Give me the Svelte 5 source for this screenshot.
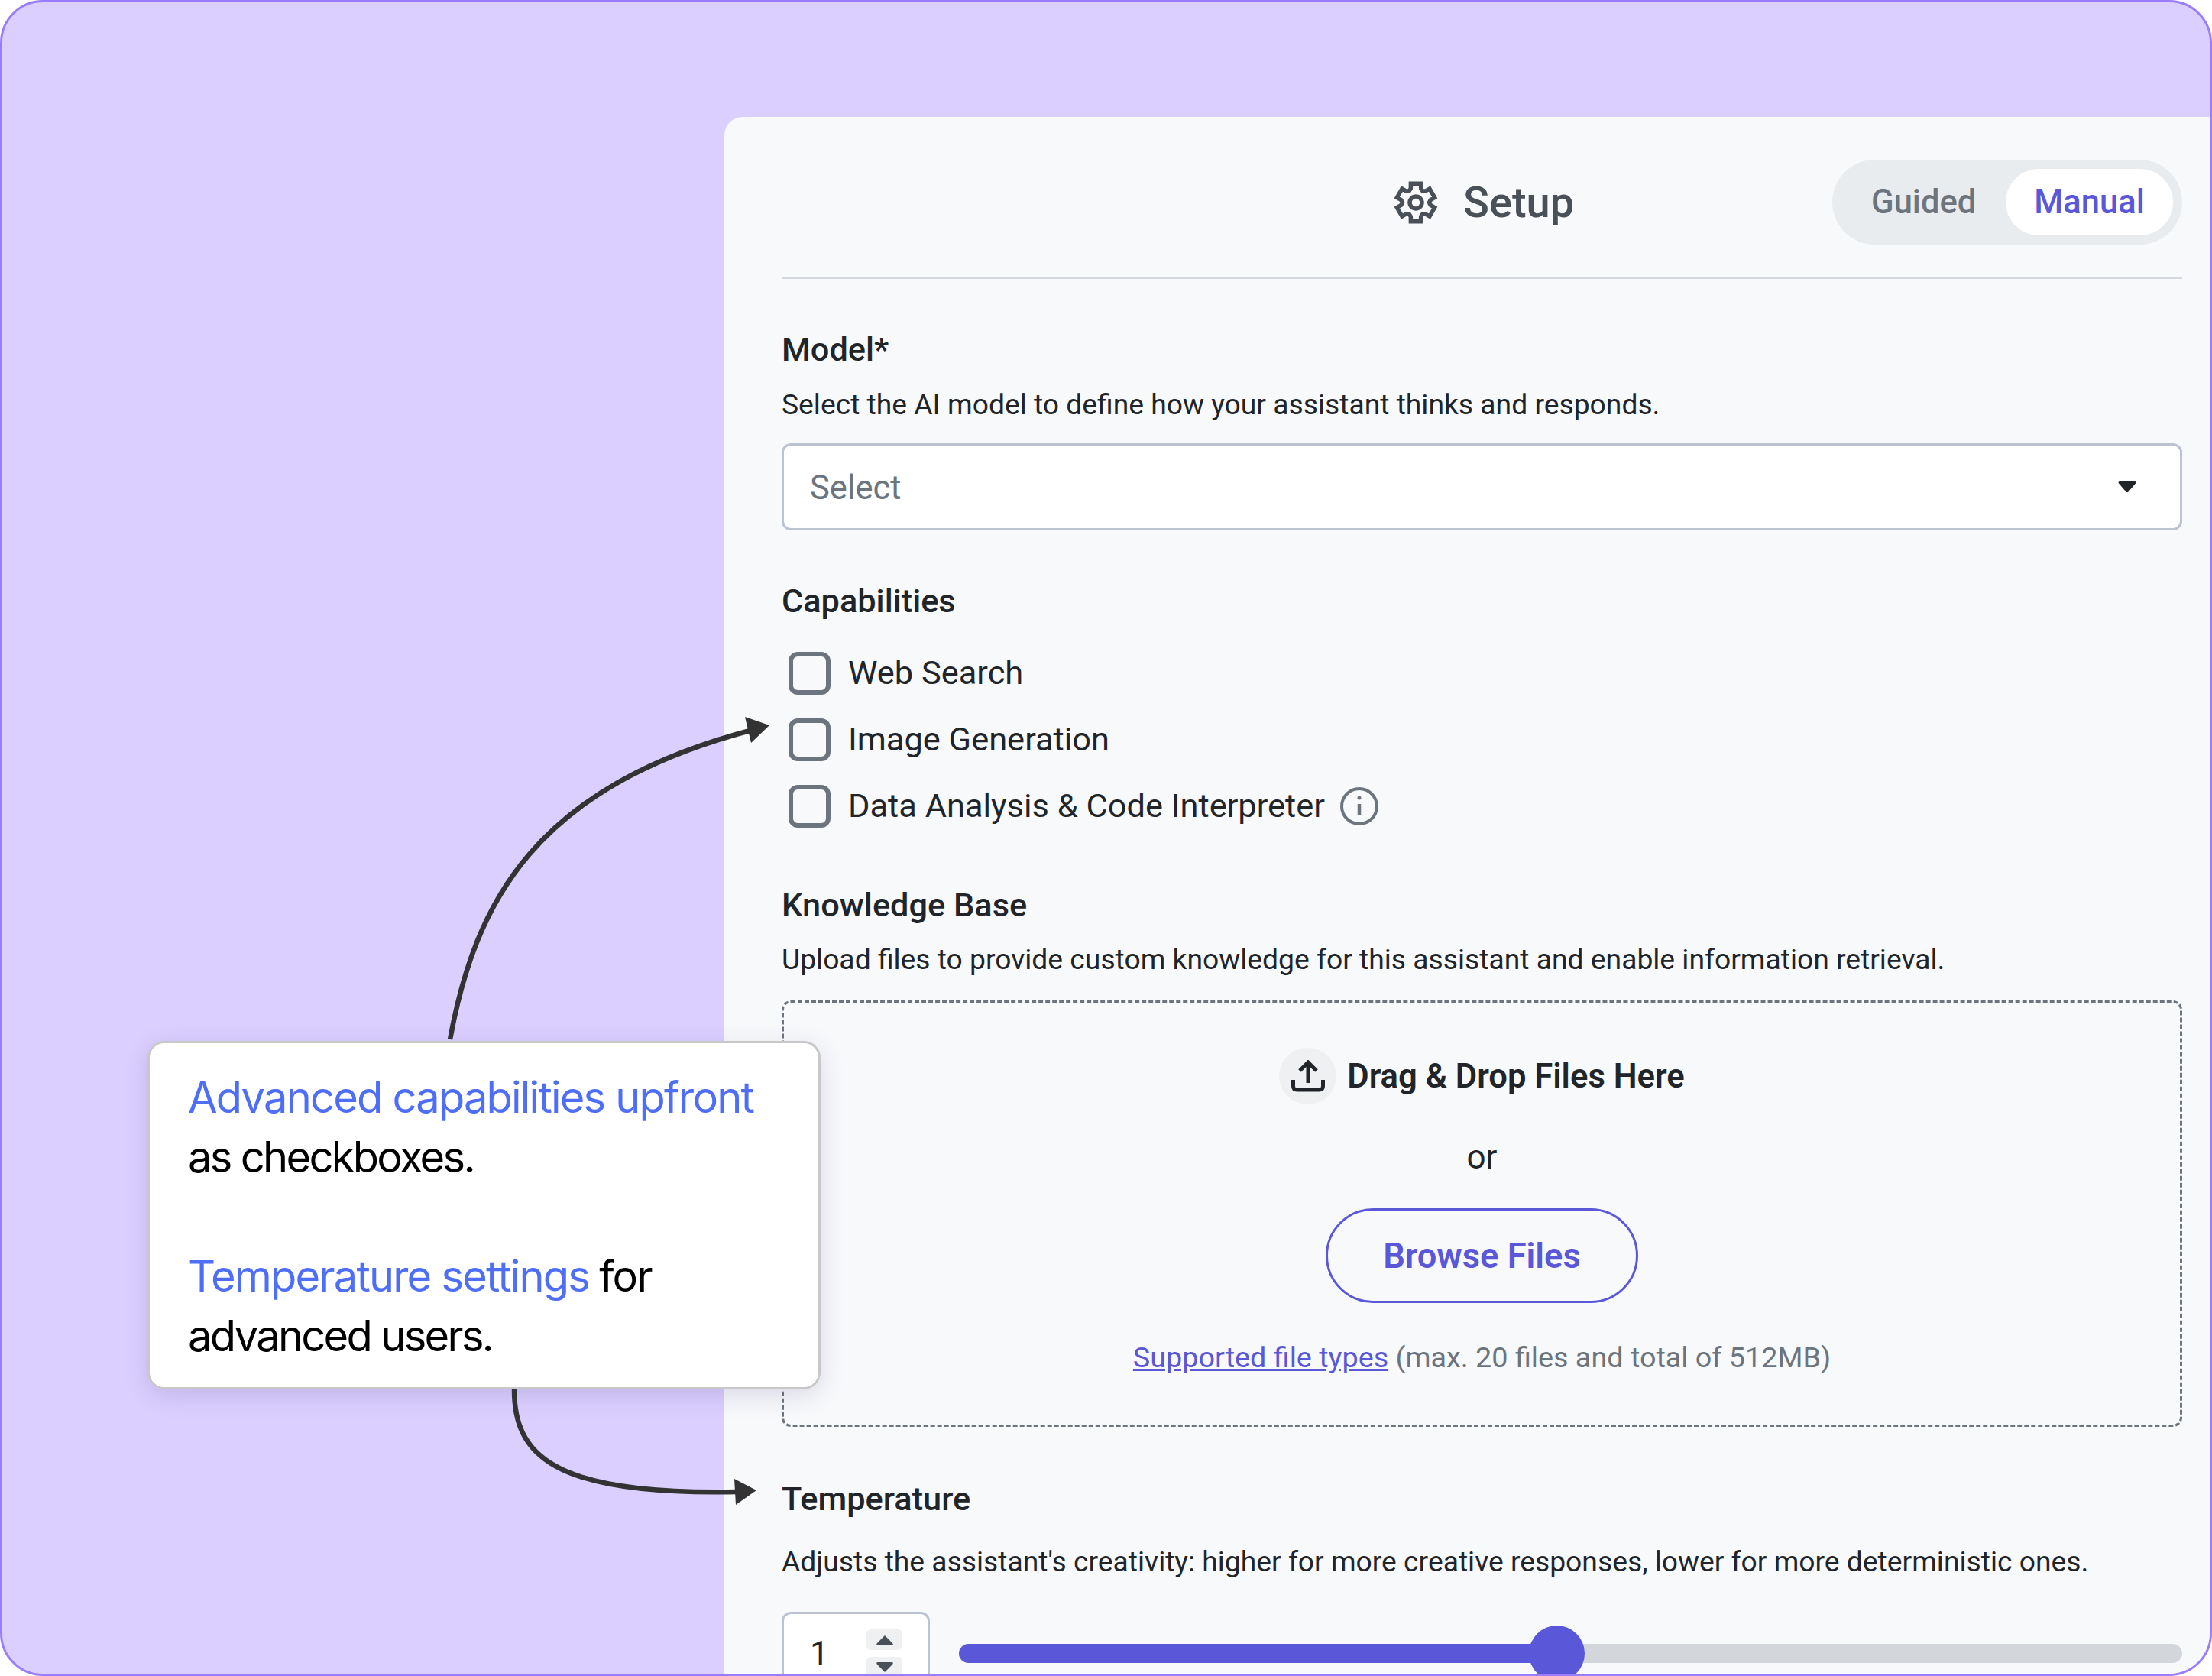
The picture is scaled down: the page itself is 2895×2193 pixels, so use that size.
<script>
  const caps = ['Web Search', 'Image Generation', 'Data Analysis & Code Interpreter'];

  function gearPath() {
    const pt = (r, deg) => {
      const a = (deg * Math.PI) / 180;
      return `${(30 + r * Math.cos(a)).toFixed(2)} ${(30 + r * Math.sin(a)).toFixed(2)}`;
    };
    const pts = [];
    for (let k = 0; k < 6; k++) {
      const a = k * 60 - 90;
      pts.push(pt(25.5, a - 15), pt(25.5, a + 15), pt(19.5, a + 20), pt(17.5, a + 30));
      pts.push(pt(19.5, a + 40));
    }
    return 'M' + pts.join('L') + 'Z';
  }
</script>

<div class="frame">
  <main class="panel">
    <header class="head">
      <div class="title">
        <svg class="gear" viewBox="0 0 60 60" fill="none" stroke="#495057" stroke-width="5.500" stroke-linejoin="miter">
          <path d={gearPath()}/>
          <circle cx="30" cy="30" r="8"/>
        </svg>
        <span>Setup</span>
      </div>
      <div class="toggle">
        <span class="opt">Guided</span>
        <span class="opt on">Manual</span>
      </div>
    </header>

    <section class="model">
      <h2>Model*</h2>
      <p class="desc">Select the AI model to define how your assistant thinks and responds.</p>
      <div class="select">
        <span>Select</span>
        <svg class="caret" viewBox="0 0 24 16"><path d="M2 1h20c1.500 0 2 1.500 1 2.600L13.500 14.500c-.8.900-2.200.900-3 0L1 3.600C0 2.500.5 1 2 1Z" fill="#212529"/></svg>
      </div>
    </section>

    <section class="caps">
      <h2>Capabilities</h2>
      <ul>
        {#each caps as c, i}
          <li>
            <span class="box"></span>
            <span>{c}</span>
            {#if i === 2}
              <svg class="info" viewBox="0 0 50 50" fill="none" stroke="#6c757d" stroke-width="4">
                <circle cx="25" cy="25" r="23"/>
                <path d="M25 22v15" stroke-width="4.500"/>
                <circle cx="25" cy="14" r="2.500" fill="#6c757d" stroke="none"/>
              </svg>
            {/if}
          </li>
        {/each}
      </ul>
    </section>

    <section class="kb">
      <h2>Knowledge Base</h2>
      <p class="desc">Upload files to provide custom knowledge for this assistant and enable information retrieval.</p>
      <div class="drop">
        <div class="drag">
          <span class="upl">
            <svg viewBox="0 0 44 42" fill="none" stroke="#212529" stroke-width="5">
              <path d="M22 30V4M11 14 22 3l11 11"/>
              <path d="M2.500 26v8q0 5 5 5h29q5 0 5-5v-8"/>
            </svg>
          </span>
          <strong>Drag &amp; Drop Files Here</strong>
        </div>
        <div class="or">or</div>
        <button class="browse">Browse Files</button>
        <p class="support"><a href="#types">Supported file types</a> (max. 20 files and total of 512MB)</p>
      </div>
    </section>

    <section class="temp">
      <h2>Temperature</h2>
      <p class="desc">Adjusts the assistant's creativity: higher for more creative responses, lower for more deterministic ones.</p>
      <div class="ctrl">
        <div class="num">
          <span>1</span>
          <div class="steps">
            <span class="step"><svg viewBox="0 0 22 14"><path d="M11 1 21 11q2 3-1 3H2q-3 0-1-3Z" fill="#495057"/></svg></span>
            <span class="step"><svg viewBox="0 0 22 14"><path d="M11 13 1 3q-2-3 1-3h18q3 0 1 3Z" fill="#495057"/></svg></span>
          </div>
        </div>
        <div class="track">
          <div class="fill" style="width: {782}px"></div>
          <div class="thumb" style="left: {782}px"></div>
        </div>
      </div>
    </section>
  </main>

  <svg class="arrows" viewBox="0 0 2895 2193" fill="none">
    <path d="M589 1360C622 1180 700 1030 985 955" stroke="#333" stroke-width="6.500"/>
    <path d="M975 938 1007 949 983 972Z" fill="#333"/>
    <path d="M673 1818C673 1902 720 1957 965 1952" stroke="#333" stroke-width="6.500"/>
    <path d="M961 1935 990 1950 963 1969Z" fill="#333"/>
  </svg>

  <aside class="note">
    <p><span class="hl">Advanced capabilities upfront</span><br/>as checkboxes.</p>
    <p><span class="hl">Temperature settings</span> <span class="for">for</span><br/>advanced users.</p>
  </aside>
</div>

<style>
  :global(body) { margin: 0; background: #fff; }
  .frame {
    position: relative;
    box-sizing: border-box;
    width: 2895px;
    height: 2193px;
    border: 3px solid #9a7dff;
    border-radius: 56px;
    background: #dbcfff;
    overflow: hidden;
    padding: 150px 0 0 945px;
    font-family: Roboto, "Liberation Sans", sans-serif;
    color: #212529;
  }
  .panel {
    box-sizing: border-box;
    height: 2100px;
    background: #f8f9fb;
    border-radius: 24px 0 0 0;
    padding: 0 36px 0 75px;
  }
  .head {
    box-sizing: border-box;
    height: 212px;
    padding-top: 56px;
    border-bottom: 3px solid #d3d7df;
    display: flex;
    justify-content: flex-end;
    align-items: flex-start;
    position: relative;
  }
  .title {
    position: absolute;
    left: 800px;
    top: 84px;
    height: 56px;
    display: flex;
    align-items: center;
    gap: 32px;
    font-size: 56px;
    font-weight: 500;
    color: #495057;
  }
  .gear { width: 60px; height: 60px; }
  .toggle {
    box-sizing: border-box;
    width: 458px;
    height: 111px;
    background: #e9ecef;
    border-radius: 56px;
    padding: 12px;
    display: flex;
    justify-content: space-between;
    align-items: stretch;
    font-size: 43.500px;
    font-weight: 500;
    color: #6c757d;
  }
  .opt { display: flex; align-items: center; padding-left: 39px; }
  .opt.on {
    width: 219px;
    box-sizing: border-box;
    padding: 0;
    justify-content: center;
    background: #fff;
    border-radius: 44px;
    color: #5a57d8;
  }
  h2 { margin: 0; font-size: 43.300px; font-weight: 500; line-height: 52px; color: #212529; }
  .desc { margin: 0; font-size: 37.250px; line-height: 50px; color: #212529; }
  .model { padding-top: 67px; }
  .model .desc { margin-top: 20px; }
  .select {
    box-sizing: border-box;
    margin-top: 26px;
    height: 114px;
    background: #fff;
    border: 3px solid #bac3cf;
    border-radius: 12px;
    padding: 3px 35px 0 34px;
    display: flex;
    align-items: center;
    justify-content: space-between;
    font-size: 43.500px;
    color: #6c757d;
  }
  .caret { width: 24px; height: 16px; margin: -3px 22px 0 0; }
  .caps { padding-top: 67px; }
  ul { list-style: none; margin: 40px 0 0; padding: 0 0 0 9px; display: flex; flex-direction: column; gap: 31px; }
  li { height: 56px; display: flex; align-items: center; font-size: 43.400px; line-height: 56px; gap: 23px; }
  .box {
    box-sizing: border-box;
    width: 55px;
    height: 56px;
    border: 6px solid #6c757d;
    border-radius: 12px;
  }
  .info { width: 50px; height: 50px; margin-left: -3px; }
  .kb { padding-top: 76px; }
  .kb .desc { margin-top: 19px; }
  .drop {
    box-sizing: border-box;
    margin-top: 29px;
    height: 558px;
    border: 3px dashed #6c757d;
    border-radius: 12px;
    display: flex;
    flex-direction: column;
    align-items: center;
    padding-top: 59px;
  }
  .drag { display: flex; align-items: center; gap: 14px; height: 74px; }
  .upl {
    width: 75px;
    height: 74px;
    border-radius: 50%;
    background: #eef0f2;
    display: flex;
    align-items: center;
    justify-content: center;
  }
  .upl svg { width: 44px; height: 42px; }
  .drag strong { font-size: 43.600px; font-weight: 600; }
  .or { margin-top: 44px; font-size: 44px; line-height: 50px; }
  .browse {
    margin-top: 42px;
    width: 409px;
    height: 124px;
    border: 3.500px solid #5a57d8;
    border-radius: 62px;
    background: transparent;
    color: #5a57d8;
    font: 600 45.300px Roboto, sans-serif;
  }
  .support { margin: 46px 0 0; font-size: 37.750px; line-height: 50px; color: #6c757d; }
  .support a { color: #5a57d8; text-decoration: underline; }
  .temp { padding-top: 69px; }
  .temp .desc { margin-top: 30px; }
  .ctrl { margin-top: 41px; display: flex; gap: 38px; }
  .num {
    box-sizing: border-box;
    width: 194px;
    height: 130px;
    flex: none;
    background: #fff;
    border: 3px solid #bac3cf;
    border-radius: 12px;
    padding: 20px 33px 0 34px;
    display: flex;
    justify-content: space-between;
    font-size: 44px;
  }
  .num > span { line-height: 64px; }
  .steps { display: flex; flex-direction: column; gap: 9px; }
  .step {
    width: 47px;
    height: 27px;
    background: #eef0f2;
    border-radius: 6px;
    display: flex;
    align-items: center;
    justify-content: center;
  }
  .step svg { width: 22px; height: 14px; }
  .track {
    position: relative;
    flex: 1;
    height: 25px;
    margin-top: 42px;
    background: #d3d7dc;
    border-radius: 13px;
  }
  .fill { height: 100%; background: #5a57d8; border-radius: 13px 0 0 13px; }
  .thumb {
    position: absolute;
    top: -24px;
    width: 73px;
    height: 73px;
    margin-left: -36px;
    border-radius: 50%;
    background: #5a57d8;
  }
  .arrows { position: absolute; left: -3px; top: -3px; width: 2895px; height: 2193px; pointer-events: none; }
  .note {
    position: absolute;
    left: 190px;
    top: 1359px;
    box-sizing: border-box;
    width: 881px;
    height: 456px;
    background: #fff;
    border: 3px solid #c8c8c8;
    border-radius: 22px;
    box-shadow: 0 8px 32px rgba(60, 50, 120, 0.16);
    padding: 32px 50px;
    font-family: Inter, sans-serif;
    font-size: 56px;
    font-weight: 400;
    line-height: 78px;
    letter-spacing: -0.048em;
    color: #000;
  }
  .note p { margin: 0 0 78px; }
  .hl { color: #4f6ef7; font-weight: 400; letter-spacing: -0.032em; }
  .for { letter-spacing: -0.03em; }
</style>
